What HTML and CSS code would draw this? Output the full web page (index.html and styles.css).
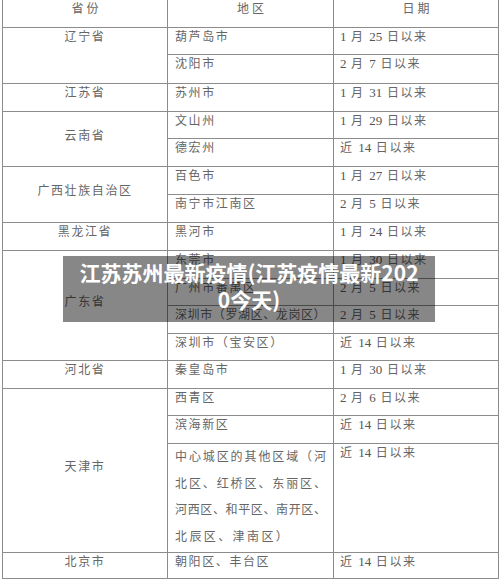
FILE: index.html
```html
<!DOCTYPE html>
<html lang="zh-CN">
<head>
<meta charset="utf-8">
<title>江苏苏州最新疫情</title>
<link rel="stylesheet" href="styles.css">
</head>
<body>
<div class="page">
  <div class="sheet">
    <div class="cell head">省份</div>
    <div class="cell head area">地区</div>
    <div class="cell head date">日期</div>

    <div class="cell prov span2">辽宁省</div>
    <div class="cell area">葫芦岛市</div>
    <div class="cell date"><span class="num">1</span> 月 <span class="num">25</span> 日以来</div>
    <div class="cell area">沈阳市</div>
    <div class="cell date"><span class="num">2</span> 月 <span class="num">7</span> 日以来</div>

    <div class="cell prov">江苏省</div>
    <div class="cell area">苏州市</div>
    <div class="cell date"><span class="num">1</span> 月 <span class="num">31</span> 日以来</div>

    <div class="cell prov span2 mid">云南省</div>
    <div class="cell area">文山州</div>
    <div class="cell date"><span class="num">1</span> 月 <span class="num">29</span> 日以来</div>
    <div class="cell area">德宏州</div>
    <div class="cell date">近 <span class="num">14</span> 日以来</div>

    <div class="cell prov span2 mid">广西壮族自治区</div>
    <div class="cell area">百色市</div>
    <div class="cell date"><span class="num">1</span> 月 <span class="num">27</span> 日以来</div>
    <div class="cell area">南宁市江南区</div>
    <div class="cell date"><span class="num">2</span> 月 <span class="num">5</span> 日以来</div>

    <div class="cell prov">黑龙江省</div>
    <div class="cell area">黑河市</div>
    <div class="cell date"><span class="num">1</span> 月 <span class="num">24</span> 日以来</div>

    <div class="cell prov span4 mid">广东省</div>
    <div class="cell area">东莞市</div>
    <div class="cell date"><span class="num">1</span> 月 <span class="num">30</span> 日以来</div>
    <div class="cell area">广州市番禺区</div>
    <div class="cell date"><span class="num">2</span> 月 <span class="num">5</span> 日以来</div>
    <div class="cell area tight">深圳市（罗湖区、龙岗区）</div>
    <div class="cell date"><span class="num">2</span> 月 <span class="num">5</span> 日以来</div>
    <div class="cell area">深圳市（宝安区）</div>
    <div class="cell date">近 <span class="num">14</span> 日以来</div>

    <div class="cell prov">河北省</div>
    <div class="cell area">秦皇岛市</div>
    <div class="cell date"><span class="num">1</span> 月 <span class="num">30</span> 日以来</div>

    <div class="cell prov span3 mid">天津市</div>
    <div class="cell area">西青区</div>
    <div class="cell date"><span class="num">2</span> 月 <span class="num">6</span> 日以来</div>
    <div class="cell area">滨海新区</div>
    <div class="cell date">近 <span class="num">14</span> 日以来</div>
    <div class="cell area multi">
      <span class="line">中心城区的其他区域（河</span>
      <span class="line">北区、红桥区、东丽区、</span>
      <span class="line">河西区、和平区、南开区、</span>
      <span class="line last">北辰区、津南区）</span>
    </div>
    <div class="cell date">近 <span class="num">14</span> 日以来</div>

    <div class="cell prov">北京市</div>
    <div class="cell area">朝阳区、丰台区</div>
    <div class="cell date">近 <span class="num">14</span> 日以来</div>
  </div>

  <div class="caption">江苏苏州最新疫情(江苏疫情最新2020今天)</div>
</div>
</body>
</html>
```

FILE: styles.css
```css
html, body {
  margin: 0;
  padding: 0;
  background: #ffffff;
}

body {
  width: 500px;
  height: 582px;
  overflow: hidden;
}

.page {
  position: relative;
  width: 500px;
  height: 582px;
}

.sheet {
  display: grid;
  grid-template-columns: 164px 165px 164px;
  grid-template-rows: 27px 26px 28px 27px 26px 27px 27px 27px 27px 27px 26px 27px 26px 27px 26px 27px 108px 25px;
  gap: 1px;
  padding: 1px;
  width: 497px;
  box-sizing: border-box;
  margin: -1px 0 0 2px;
  background: #8c8c8c;
  font-family: "Liberation Serif", "Noto Sans CJK SC", serif;
  font-size: 12px;
  line-height: 18px;
  color: #666666;
  letter-spacing: 1.6px;
}

.cell {
  background: #ffffff;
  white-space: nowrap;
  overflow: hidden;
}

.head {
  grid-column: 1;
  text-align: center;
  letter-spacing: 3px;
  padding-left: 3px;
}

.prov {
  grid-column: 1;
  text-align: center;
}

.area {
  grid-column: 2;
  text-align: left;
  padding-left: 7px;
}

.date {
  grid-column: 3;
  text-align: left;
  padding-left: 6px;
}

.num {
  font-size: 13px;
  letter-spacing: 0;
  color: #555555;
}

.head.area {
  grid-column: 2;
  text-align: center;
  padding-left: 3px;
}

.head.date {
  grid-column: 3;
  text-align: center;
  padding-left: 3px;
}

.span2 { grid-row: span 2; }
.span3 { grid-row: span 3; }
.span4 { grid-row: span 4; }

.mid {
  display: flex;
  align-items: center;
  justify-content: center;
  padding-bottom: 7px;
  box-sizing: border-box;
}

.tight {
  letter-spacing: 0.6px;
  overflow: visible;
}

.multi {
  display: flex;
  flex-direction: column;
  padding-right: 7px;
  line-height: 26.5px;
}

.line {
  display: block;
  text-align: justify;
  text-align-last: justify;
  letter-spacing: 0;
}

.line.last {
  text-align: left;
  text-align-last: left;
  letter-spacing: 2.4px;
}

.caption {
  position: absolute;
  left: 63px;
  top: 257px;
  width: 372px;
  height: 66px;
  box-sizing: border-box;
  padding: 3px 12px 0;
  background: rgba(0, 0, 0, 0.47);
  color: #ffffff;
  font-family: "Noto Sans CJK SC", "Noto Sans", sans-serif;
  font-weight: 700;
  font-size: 21px;
  line-height: 27px;
  text-align: center;
  word-break: break-all;
}
```
